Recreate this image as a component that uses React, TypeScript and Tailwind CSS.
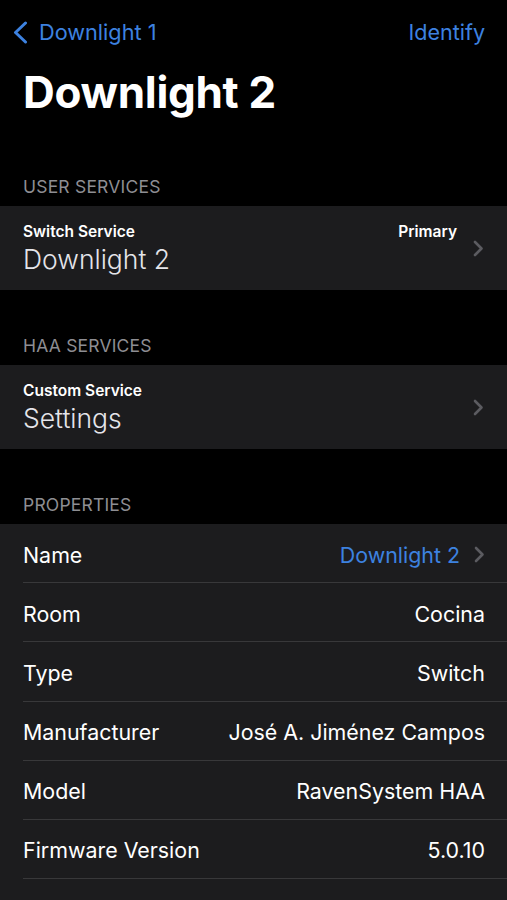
const font = { fontFamily: "Inter, 'Noto Sans', sans-serif" };

function Chevron() {
  return (
    <svg width="11" height="17" viewBox="0 0 11 17" className="shrink-0">
      <polyline
        points="2,2 8.5,8.5 2,15"
        fill="none"
        stroke="#5b5b60"
        strokeWidth="2.6"
        strokeLinecap="round"
        strokeLinejoin="round"
      />
    </svg>
  );
}

function SectionHeader({ title }: { title: string }) {
  return (
    <div className="px-[23px] pt-[21px] pb-[9px] text-[17.5px] leading-[20px] tracking-[0.2px] text-[#8e8e93] uppercase">
      {title}
    </div>
  );
}

function ServiceCard({
  kind,
  name,
  badge,
}: {
  kind: string;
  name: string;
  badge?: string;
}) {
  return (
    <div className="h-[84px] bg-[#1c1c1e] flex items-center pl-[23px] pr-[23px]">
      <div className="flex-1 flex flex-col pt-[2px]">
        <div className="flex justify-between items-center">
          <span className="text-[15.5px] leading-[20px] font-semibold text-white">
            {kind}
          </span>
          {badge && (
            <span className="text-[15.5px] leading-[20px] font-semibold text-white mr-[4px]">
              {badge}
            </span>
          )}
        </div>
        <span className="text-[26.5px] leading-[34px] font-light text-[#e5e5ea]">
          {name}
        </span>
      </div>
      <div className="ml-[12px]">
        <Chevron />
      </div>
    </div>
  );
}

function PropRow({
  label,
  value,
  link,
}: {
  label?: string;
  value?: string;
  link?: boolean;
}) {
  return (
    <div className="pl-[23px]">
      <div className="h-[59.2px] flex items-center justify-between pr-[22px] pt-[3px] border-b border-[#38383a]">
        <span className="text-[21.4px] text-white">{label}</span>
        <div className="flex items-center">
          <span
            className={
              link ? "text-[21.4px] text-[#3d82e0]" : "text-[21.4px] text-white"
            }
          >
            {value}
          </span>
          {link && (
            <div className="ml-[14px]">
              <Chevron />
            </div>
          )}
        </div>
      </div>
    </div>
  );
}

export default function App() {
  return (
    <div style={font} className="w-[507px] h-[900px] bg-black overflow-hidden">
      {/* nav bar */}
      <div className="h-[64px] flex items-center justify-between pl-[13px] pr-[22px] pt-[1px]">
        <div className="flex items-center text-[#3d82e0]">
          <svg width="15" height="23" viewBox="0 0 15 23">
            <polyline
              points="12.5,2 2.5,11.5 12.5,21"
              fill="none"
              stroke="#3d82e0"
              strokeWidth="3"
              strokeLinecap="round"
              strokeLinejoin="round"
            />
          </svg>
          <span className="text-[21.7px] ml-[11px]">Downlight 1</span>
        </div>
        <span className="text-[21.5px] text-[#3d82e0]">Identify</span>
      </div>
      <div className="px-[23px] text-[44px] leading-[56px] font-bold text-white tracking-[-0.3px]">
        Downlight 2
      </div>

      <div className="h-[36px]" />
      <SectionHeader title="User Services" />
      <ServiceCard kind="Switch Service" name="Downlight 2" badge="Primary" />

      <div className="h-[25px]" />
      <SectionHeader title="HAA Services" />
      <ServiceCard kind="Custom Service" name="Settings" />

      <div className="h-[25px]" />
      <SectionHeader title="Properties" />
      <div className="bg-[#1c1c1e]">
        <PropRow label="Name" value="Downlight 2" link />
        <PropRow label="Room" value="Cocina" />
        <PropRow label="Type" value="Switch" />
        <PropRow label="Manufacturer" value="José A. Jiménez Campos" />
        <PropRow label="Model" value="RavenSystem HAA" />
        <PropRow label="Firmware Version" value="5.0.10" />
        <PropRow />
      </div>
    </div>
  );
}
